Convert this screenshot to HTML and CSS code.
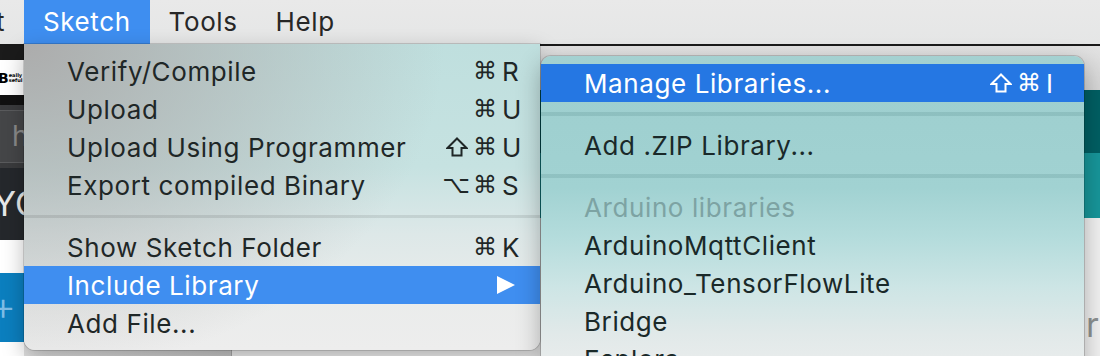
FILE: index.html
```html
<!DOCTYPE html>
<html lang="en">
<head>
<meta charset="utf-8">
<title>Sketch menu</title>
<link rel="stylesheet" href="styles.css">
</head>
<body>
<div class="screen">
  <div class="menubar">
    <div class="mb-cut"><span>Edit</span></div>
    <div class="mb-item active">Sketch</div>
    <div class="mb-item">Tools</div>
    <div class="mb-item">Help</div>
  </div>

  <div class="desktop">
    <div class="sidebar">
      <div class="s-black"></div>
      <div class="s-logo"><b>B</b><span class="s-logo-text">eally<br>seful</span></div>
      <div class="s-black2"></div>
      <div class="s-search"><span>h</span></div>
      <div class="s-hero">YO</div>
      <div class="s-white"></div>
      <div class="s-blue">+</div>
      <div class="s-white2"></div>
    </div>
    <div class="panel"></div>
    <div class="pane">
      <div class="p-toolbar"></div>
      <div class="p-teal-dark"></div>
      <div class="p-teal"></div>
      <div class="p-content"><span>r</span></div>
    </div>
  </div>

  <div class="menu main-menu">
    <div class="mi"><span class="lbl">Verify/Compile</span><span class="sc"><span class="mod">⌘</span><span class="key">R</span></span></div>
    <div class="mi"><span class="lbl">Upload</span><span class="sc"><span class="mod">⌘</span><span class="key">U</span></span></div>
    <div class="mi"><span class="lbl">Upload Using Programmer</span><span class="sc"><svg class="shift" width="22" height="20" viewBox="0 0 22 20"><path d="M11 1.5 L20.5 11 L15.5 11 L15.5 18.5 L6.5 18.5 L6.5 11 L1.5 11 Z" fill="none" stroke="currentColor" stroke-width="2" stroke-linejoin="miter"/></svg><span class="mod">⌘</span><span class="key">U</span></span></div>
    <div class="mi"><span class="lbl">Export compiled Binary</span><span class="sc"><span class="mod">⌥⌘</span><span class="key">S</span></span></div>
    <div class="sep"></div>
    <div class="mi"><span class="lbl">Show Sketch Folder</span><span class="sc"><span class="mod">⌘</span><span class="key">K</span></span></div>
    <div class="mi hl"><span class="lbl">Include Library</span><svg class="arrow" width="18" height="18" viewBox="0 0 18 18"><path d="M0 0 L18 9 L0 18 Z" fill="#fff"/></svg></div>
    <div class="mi"><span class="lbl">Add File...</span></div>
  </div>

  <div class="menu sub-menu">
    <div class="mi hl2"><span class="lbl">Manage Libraries...</span><span class="sc"><svg class="shift" width="22" height="20" viewBox="0 0 22 20"><path d="M11 1.5 L20.5 11 L15.5 11 L15.5 18.5 L6.5 18.5 L6.5 11 L1.5 11 Z" fill="none" stroke="currentColor" stroke-width="2" stroke-linejoin="miter"/></svg><span class="mod">⌘</span><span class="key">I</span></span></div>
    <div class="sep"></div>
    <div class="mi"><span class="lbl">Add .ZIP Library...</span></div>
    <div class="sep"></div>
    <div class="mi disabled"><span class="lbl">Arduino libraries</span></div>
    <div class="mi"><span class="lbl">ArduinoMqttClient</span></div>
    <div class="mi"><span class="lbl">Arduino_TensorFlowLite</span></div>
    <div class="mi"><span class="lbl">Bridge</span></div>
    <div class="mi"><span class="lbl">Esplora</span></div>
  </div>
</div>
</body>
</html>
```

FILE: styles.css
```css
* { box-sizing: border-box; }

html, body {
  margin: 0;
  padding: 0;
  width: 1100px;
  height: 356px;
  overflow: hidden;
  background: #f0f0f0;
}

.screen {
  position: relative;
  width: 1100px;
  height: 356px;
  overflow: hidden;
  font-family: "Inter", "DejaVu Sans", sans-serif;
}

/* ---------- menu bar ---------- */
.menubar {
  display: flex;
  height: 44px;
  background: linear-gradient(180deg, #e9e9e9, #e5e6e6);
  font-size: 26px;
  letter-spacing: 0.6px;
  color: #272727;
  line-height: 44px;
}
.mb-cut {
  width: 24px;
  padding-right: 19px;
  display: flex;
  justify-content: flex-end;
  overflow: hidden;
  white-space: nowrap;
}
.mb-item {
  padding: 0 19px;
  white-space: nowrap;
}
.mb-item.active {
  background: #3e8ef0;
  color: #fff;
}

/* ---------- background windows ---------- */
.desktop {
  display: flex;
  height: 312px;
  border-top: 2px solid #1a1a1a;
}
.sidebar {
  width: 24px;
  display: flex;
  flex-direction: column;
  overflow: hidden;
  background: #fff;
}
.s-black { height: 14px; background: #1b1b1b; }
.s-logo {
  height: 35px;
  background: #fff;
  display: flex;
  align-items: center;
  font-family: "DejaVu Sans", sans-serif;
  color: #000;
}
.s-logo b { font-size: 14px; margin-left: -2px; }
.s-logo-text { font-size: 5px; line-height: 5px; font-weight: bold; }
.s-black2 { height: 10px; background: #111; }
.s-search {
  height: 63px;
  background: #3a3b3d;
  padding: 5px 0;
  display: flex;
}
.s-search span {
  flex: 1;
  border: 1px solid #5a5b5d;
  border-left: none;
  background: #454648;
  color: #8a8a8a;
  font-size: 28px;
  line-height: 50px;
  padding-left: 12px;
}
.s-hero {
  height: 72px;
  background: #25282c;
  color: #e8e8e8;
  font-size: 34px;
  line-height: 72px;
  text-indent: -7px;
  white-space: nowrap;
}
.s-white { height: 33px; background: #fff; }
.s-blue {
  height: 69px;
  background: #0b7fbf;
  color: #7fbde6;
  font-size: 40px;
  line-height: 66px;
  text-indent: -10px;
  font-weight: 300;
}
.s-white2 { flex: 1; background: #fff; }

.panel {
  width: 208px;
  background: linear-gradient(90deg, #e2e2e2, #c8c8c8);
  border-right: 1px solid #a9a9a9;
}
.pane {
  flex: 1;
  display: flex;
  flex-direction: column;
}
.p-toolbar { height: 44px; background: linear-gradient(180deg, #e2e2e2, #d6d6d6); }
.p-teal-dark { height: 63px; background: #005f63; }
.p-teal { height: 65px; background: #17969a; }
.p-content {
  flex: 1;
  background: #f1f1f1;
  display: flex;
  justify-content: flex-end;
  align-items: flex-end;
  padding-bottom: 14px;
}
.p-content span {
  width: 14px;
  color: #8d9292;
  font-size: 34px;
  line-height: 34px;
  overflow: hidden;
}

/* ---------- menus ---------- */
.menu {
  position: absolute;
  font-size: 26px;
  letter-spacing: 0.6px;
  color: #1f2727;
}
.main-menu {
  left: 24px;
  top: 44px;
  width: 516px;
  height: 306px;
  padding-top: 8px;
  border-radius: 0 0 11px 11px;
  background:
    radial-gradient(ellipse 420px 330px at 0 0, rgba(172,172,172,1) 0%, rgba(175,176,176,0.65) 40%, rgba(180,180,180,0) 100%),
    linear-gradient(180deg, #bfdfde 0%, #c6e2e1 40%, #dde8e8 62%, #eaeceb 82%, #ededed 100%);
  box-shadow: 0 0 0 1px rgba(0,0,0,0.14), 0 8px 22px rgba(0,0,0,0.28);
  z-index: 1;
}
.sub-menu {
  left: 541px;
  top: 56px;
  width: 543px;
  height: 330px;
  padding-top: 8px;
  border-radius: 10px 10px 0 0;
  background: linear-gradient(180deg, #a4d1d1 0%, #9ecfcf 12%, #a1d2d2 40%, #b4dcdc 55%, #cde5e5 70%, #e1e9e9 84%, #ebeded 96%);
  box-shadow: 0 0 0 1px rgba(0,0,0,0.16), 0 8px 24px rgba(0,0,0,0.3);
  z-index: 2;
  color: #1a2929;
}

.mi {
  display: flex;
  align-items: center;
  height: 38px;
  padding: 0 16px 0 43px;
  white-space: nowrap;
}
.lbl { flex: 1; }
.sc {
  display: flex;
  align-items: center;
  font-family: "DejaVu Sans", sans-serif;
  letter-spacing: 0;
}
.shift { margin-right: 5px; }
.mod {
  font-size: 24px;
  letter-spacing: 3px;
}
.key {
  width: 22px;
  margin-left: 2px;
  font-family: "Inter", sans-serif;
  font-size: 26px;
}
.hl {
  background: #3f8ef0;
  color: #fff;
}
.hl2 {
  background: #2577e3;
  color: #fff;
}
.arrow { margin-right: 9px; }
.disabled { color: #7da3a3; }

.main-menu .sep {
  height: 24px;
  display: flex;
  align-items: center;
}
.main-menu .sep::before {
  content: "";
  flex: 1;
  height: 3px;
  background: rgba(0,0,0,0.09);
}
.sub-menu .sep {
  height: 24px;
  display: flex;
  align-items: center;
}
.sub-menu .sep::before {
  content: "";
  flex: 1;
  height: 4px;
  background: rgba(0,60,60,0.1);
}
```
